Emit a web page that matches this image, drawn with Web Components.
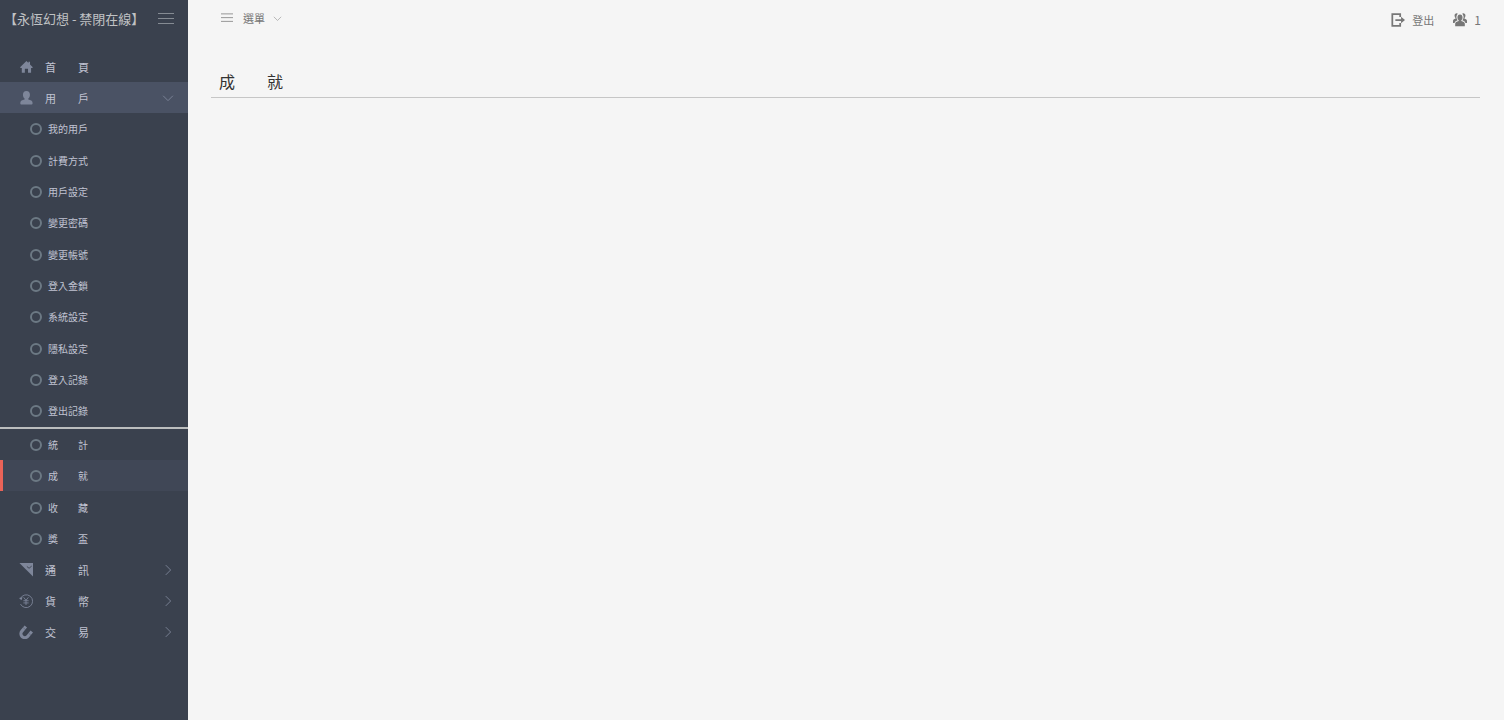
<!DOCTYPE html>
<html lang="zh-Hant">
<head>
<meta charset="utf-8">
<title>成就</title>
<style>
html, body{
    height: 100%;
    margin: 0;
}
body{
    background-color: #f5f5f5;
    color: #333;
    font-family: "Noto Sans CJK TC", sans-serif;
    font-size: 11px;
}
</style>
</head>
<body>
<admin-shell>
    <side-bar slot="side" heading="【永恆幻想 - 禁閉在線】">
        <nav-item icon="home">首　　頁</nav-item>
        <nav-group icon="user" label="用　　戶" open>
            <sub-item>我的用戶</sub-item>
            <sub-item>計費方式</sub-item>
            <sub-item>用戶設定</sub-item>
            <sub-item>變更密碼</sub-item>
            <sub-item>變更帳號</sub-item>
            <sub-item>登入金鎖</sub-item>
            <sub-item>系統設定</sub-item>
            <sub-item>隱私設定</sub-item>
            <sub-item>登入記錄</sub-item>
            <sub-item>登出記錄</sub-item>
            <hr>
            <sub-item>統　　計</sub-item>
            <sub-item active>成　　就</sub-item>
            <sub-item>收　　藏</sub-item>
            <sub-item>獎　　盃</sub-item>
        </nav-group>
        <nav-group icon="message" label="通　　訊"></nav-group>
        <nav-group icon="money" label="貨　　幣"></nav-group>
        <nav-group icon="magnet" label="交　　易"></nav-group>
    </side-bar>
    <top-bar slot="top" menu="選單" logout="登出" online="1"></top-bar>
    <page-title>成　　就</page-title>
</admin-shell>

<script>
const icons={
    home: '<path fill="currentColor" d="M8.500 1 10.800 3.300V2h1.800v3.100L15.500 8v1h-1.700v5.500h-3.500V10H6.700v4.500H3.200V9H1.500V8z"/>',
    user: '<path fill="currentColor" d="M8.500 0c2.600 0 4 1.800 4 4.200 0 2-.8 3.500-1.900 4.500v1.100c2.700.6 4.900 1.500 4.900 3.500v1c0 .6-.4 1-1 1h-12c-.6 0-1-.4-1-1v-1c0-2 2.200-2.900 4.900-3.500V8.700C5.300 7.700 4.500 6.200 4.500 4.200 4.500 1.800 5.900 0 8.500 0z"/>',
    message: '<path fill="currentColor" d="M.5 0H16v15.500z"/><path fill="none" stroke="#39404d" d="m9 4 2.500 2 3-2.500"/>',
    money: '<g fill="none" stroke="currentColor"><path d="M1.700 5A7.300 7.300 0 1 1 1.700 11.500"/><path d="m5.300 3.800 2.700 3.400 2.700-3.400M8 7.200v5.300M5 7.700h6M5 10.200h6"/></g><path fill="currentColor" d="M0 4.500 4 3.800 2.800 7z"/>',
    magnet: '<path fill="none" stroke="currentColor" stroke-width="3.600" d="M7.800 1.800 3.300 7a4.500 4.500 0 0 0 6.400 6.300L14.600 7.300"/><path stroke="#39404d" stroke-width=".4" d="m4.800 3 2.700 2.400M11 9.500l2.700 2.300"/>',
    bars: '<path fill="none" stroke="currentColor" d="M0 2.500h16M0 7.500h16M0 12.500h16"/>',
    down: '<path fill="none" stroke="currentColor" stroke-width="1.200" d="m1.500 5 6.500 6.500L14.500 5"/>',
    right: '<path fill="none" stroke="currentColor" stroke-width="1.200" d="M5 1.500 11.500 8 5 14.500"/>',
    logout: '<path fill="none" stroke="currentColor" stroke-width="2" d="M10.500 4.500V1.200H1.500v13.600h9v-3.300"/><path fill="currentColor" d="M5 7h6.500V4.200L16 8l-4.500 3.800V9H5z"/>',
    people: '<g fill="currentColor"><path d="M8 1.800c1.900 0 2.900 1.300 2.900 3.200 0 1.500-.6 2.600-1.400 3.300v.8c2.200.5 4 1.300 4 3V15h-11v-2.900c0-1.700 1.800-2.500 4-3v-.8C5.700 7.600 5.100 6.500 5.100 5c0-1.900 1-3.200 2.900-3.200z"/><path d="M5.200.5C3.400-.3 1.600 1 1.800 3.200c0 1.200.4 2 1 2.600v.8C1.200 7 0 7.700 0 9v2.300h1.800c.6-1.600 1.900-2.400 3.500-2.900C4.200 7.300 3.700 5.400 4 3.700c.2-1.200.6-2 1.200-2.700zM10.800.5c1.800-.8 3.600.5 3.400 2.700 0 1.200-.4 2-1 2.600v.8c1.600.4 2.800 1.100 2.800 2.400v2.300h-1.800c-.6-1.600-1.900-2.400-3.500-2.900 1.100-1.100 1.600-3 1.300-4.700-.2-1.200-.6-2-1.200-2.700z"/></g>'
}

class SvgIcon extends HTMLElement{
    constructor(){
        super()
        this.attachShadow({mode:'open'})
    }
    connectedCallback(){
        this.shadowRoot.innerHTML=`
<style>
:host{
    display: block;
    flex: none;
    width: 14px;
    height: 14px;
}
svg{
    display: block;
    width: 100%;
    height: 100%;
}
</style>
<svg viewBox="0 0 16 16" aria-hidden="true">${icons[this.getAttribute('name')]}</svg>`
    }
}
customElements.define('svg-icon',SvgIcon)

class AdminShell extends HTMLElement{
    constructor(){
        super()
        this.attachShadow({mode:'open'}).innerHTML=`
<style>
:host{
    display: grid;
    grid-template-columns: 188px 1fr;
    min-height: 100%;
}
main{
    padding: 31px 24px 0 23px;
}
</style>
<slot name="side"></slot>
<div>
    <slot name="top"></slot>
    <main><slot></slot></main>
</div>`
    }
}
customElements.define('admin-shell',AdminShell)

class SideBar extends HTMLElement{
    constructor(){
        super()
        this.attachShadow({mode:'open'}).innerHTML=`
<style>
:host{
    display: block;
    background-color: #3a414e;
    color: #c0c3d2;
}
header{
    display: flex;
    align-items: center;
    justify-content: space-between;
    height: 36px;
    padding: 0 14px 0 4px;
    margin-bottom: 15px;
}
h1{
    margin: 0;
    font-size: 13px;
    font-weight: normal;
    color: #c0c2c4;
    white-space: nowrap;
}
button{
    padding: 2px 0 0;
    border: 0;
    background: none;
    color: #858b93;
    cursor: pointer;
}
svg-icon{
    width: 16px;
    height: 16px;
}
</style>
<header>
    <h1></h1>
    <button type="button" aria-label="選單"><svg-icon name="bars"></svg-icon></button>
</header>
<nav><slot></slot></nav>`
    }
    connectedCallback(){
        this.shadowRoot.querySelector('h1').textContent=this.getAttribute('heading')
    }
}
customElements.define('side-bar',SideBar)

class NavItem extends HTMLElement{
    constructor(){
        super()
        this.attachShadow({mode:'open'})
    }
    connectedCallback(){
        this.shadowRoot.innerHTML=`
<style>
:host{
    display: block;
}
a{
    display: flex;
    align-items: center;
    gap: 12px;
    height: 31px;
    padding-left: 19px;
    color: inherit;
    text-decoration: none;
}
svg-icon{
    color: #7e869a;
}
</style>
<a href="#"><svg-icon name="${this.getAttribute('icon')}"></svg-icon><span><slot></slot></span></a>`
    }
}
customElements.define('nav-item',NavItem)

class NavGroup extends HTMLElement{
    constructor(){
        super()
        this.attachShadow({mode:'open'})
    }
    connectedCallback(){
        this.shadowRoot.innerHTML=`
<style>
:host{
    display: block;
}
button{
    display: flex;
    align-items: center;
    gap: 12px;
    width: 100%;
    height: 31px;
    padding: 0 14px 0 19px;
    border: 0;
    background: none;
    color: inherit;
    font: inherit;
    text-align: left;
    cursor: pointer;
}
:host([open]) button{
    background-color: #4a5264;
}
span{
    flex: 1;
}
svg-icon{
    color: #7e869a;
}
.arrow{
    width: 12px;
    height: 12px;
}
div{
    display: none;
}
:host([open]) div{
    display: block;
}
::slotted(hr){
    height: 2px;
    margin: 0;
    border: 0;
    background-color: #bbbdbe;
}
::slotted(:nth-child(3n+1)){
    margin-bottom: 1px;
}
</style>
<button type="button">
    <svg-icon name="${this.getAttribute('icon')}"></svg-icon>
    <span>${this.getAttribute('label')}</span>
    <svg-icon class="arrow" name="${this.hasAttribute('open')?'down':'right'}"></svg-icon>
</button>
<div><slot></slot></div>`
        this.shadowRoot.querySelector('button').addEventListener('click',()=>{
            this.toggleAttribute('open')
            this.connectedCallback()
        })
    }
}
customElements.define('nav-group',NavGroup)

class SubItem extends HTMLElement{
    constructor(){
        super()
        this.attachShadow({mode:'open'}).innerHTML=`
<style>
:host{
    display: block;
    font-size: 10px;
}
a{
    display: flex;
    align-items: center;
    gap: 6px;
    box-sizing: border-box;
    height: 31px;
    padding-left: 27px;
    border-left: 3px solid transparent;
    color: inherit;
    text-decoration: none;
}
a::before{
    content: "";
    box-sizing: border-box;
    width: 12px;
    height: 12px;
    border: 2px solid #6c7984;
    border-radius: 50%;
}
:host([active]) a{
    background-color: #404756;
    border-left-color: #ea6358;
}
</style>
<a href="#"><span><slot></slot></span></a>`
    }
}
customElements.define('sub-item',SubItem)

class TopBar extends HTMLElement{
    constructor(){
        super()
        this.attachShadow({mode:'open'})
    }
    connectedCallback(){
        this.shadowRoot.innerHTML=`
<style>
:host{
    display: flex;
    align-items: center;
    justify-content: space-between;
    height: 36px;
    padding: 0 23px 0 33px;
    color: #777;
}
button, a, div, span{
    display: flex;
    align-items: center;
}
button{
    gap: 10px;
    padding: 0;
    border: 0;
    background: none;
    color: inherit;
    font: inherit;
    cursor: pointer;
}
a{
    gap: 7px;
    color: inherit;
    text-decoration: none;
}
div{
    gap: 19px;
    padding-top: 3px;
}
span{
    gap: 7px;
    font-size: 12px;
}
.bars{
    width: 12px;
    height: 12px;
}
.arrow{
    width: 9px;
    height: 9px;
    margin-left: -2px;
    color: #999;
}
</style>
<button type="button"><svg-icon class="bars" name="bars"></svg-icon>${this.getAttribute('menu')}<svg-icon class="arrow" name="down"></svg-icon></button>
<div>
    <a href="#"><svg-icon name="logout"></svg-icon>${this.getAttribute('logout')}</a>
    <span><svg-icon name="people"></svg-icon>${this.getAttribute('online')}</span>
</div>`
    }
}
customElements.define('top-bar',TopBar)

class PageTitle extends HTMLElement{
    constructor(){
        super()
        this.attachShadow({mode:'open'}).innerHTML=`
<style>
:host{
    display: block;
    border-bottom: 1px solid #c6c6c6;
}
h2{
    margin: 0;
    padding: 0 8px 2px;
    font-size: 16px;
    font-weight: normal;
    line-height: 28px;
}
</style>
<h2><slot></slot></h2>`
    }
}
customElements.define('page-title',PageTitle)
</script>
</body>
</html>
